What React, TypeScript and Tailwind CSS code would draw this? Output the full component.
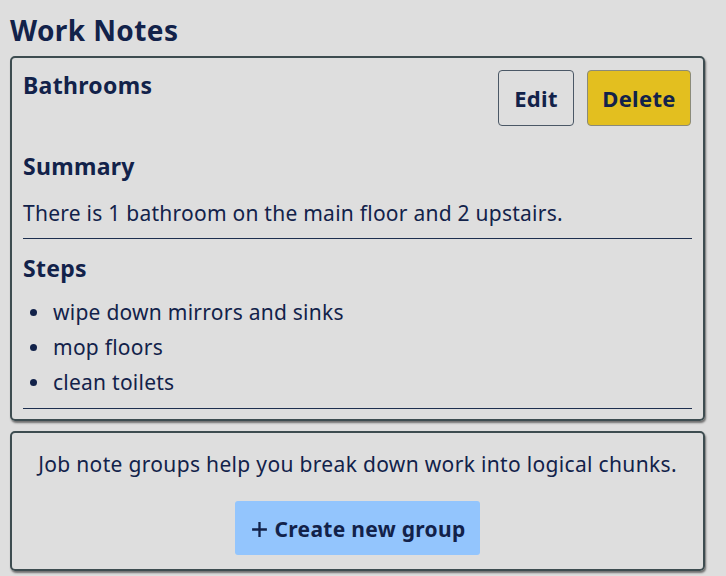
import React from "react";

const steps = ["wipe down mirrors and sinks", "mop floors", "clean toilets"];

export default function App() {
  return (
    <div
      className="w-[726px] h-[576px] overflow-hidden bg-[#dedede] px-[10px] text-[#12224a]"
      style={{ fontFamily: '"Noto Sans", "Open Sans", sans-serif' }}
    >
      <h1 className="mt-[12px] h-[36px] text-[28px] leading-[36px] font-bold tracking-[0.4px]">Work Notes</h1>

      <div className="mt-[8px] w-[695px] rounded-[5px] border-2 border-[#3d4c50] px-[11px] pt-[12px] pb-[10px] shadow-[1px_2px_2px_rgba(0,0,0,0.5)]">
        <div className="flex items-start justify-between">
          <h2 className="mt-[1px] text-[23px] leading-[28px] font-bold tracking-[0.3px]">Bathrooms</h2>
          <div className="flex gap-[13px] pr-[1px]">
            <button className="h-[56px] w-[76px] rounded-[4px] border border-[#4b5866] text-[22px] font-bold tracking-[0.3px]">
              Edit
            </button>
            <button className="h-[56px] w-[104px] rounded-[4px] border border-[#8a8a7a] bg-[#e3bf1f] text-[22px] font-bold tracking-[0.3px]">
              Delete
            </button>
          </div>
        </div>

        <h3 className="mt-[26px] text-[23px] leading-[28px] font-bold tracking-[0.3px]">Summary</h3>
        <p className="mt-[19px] text-[21px] leading-[28px] tracking-[0.25px]">
          There is 1 bathroom on the main floor and 2 upstairs.
        </p>
        <div className="mt-[11px] h-px bg-[#1d2f4f]" />

        <h3 className="mt-[15px] text-[23px] leading-[28px] font-bold tracking-[0.3px]">Steps</h3>
        <ul className="mt-[13px]">
          {steps.map((s) => (
            <li key={s} className="flex items-center text-[21px] leading-[35px] tracking-[0.25px]">
              <span className="ml-[7px] mr-[16px] h-[7px] w-[7px] rounded-full bg-[#12224a]" />
              {s}
            </li>
          ))}
        </ul>
        <div className="mt-[8px] h-px bg-[#1d2f4f]" />
      </div>

      <div className="mt-[10px] flex w-[695px] flex-col items-center rounded-[5px] border-2 border-[#3d4c50] pt-[17px] pb-[14px] shadow-[1px_2px_2px_rgba(0,0,0,0.5)]">
        <p className="text-[21px] leading-[28px] tracking-[0.33px]">
          Job note groups help you break down work into logical chunks.
        </p>
        <button className="mt-[23px] flex h-[54px] w-[245px] items-center justify-center gap-[6px] rounded-[3px] bg-[#93c5fd] pt-[4px] text-[21px] font-bold tracking-[0.3px]">
          <svg width="19" height="19" viewBox="0 0 18 18" className="-mt-[2px]">
            <path d="M9 2v14M2 9h14" stroke="#12224a" strokeWidth="2.2" />
          </svg>
          Create new group
        </button>
      </div>
    </div>
  );
}
